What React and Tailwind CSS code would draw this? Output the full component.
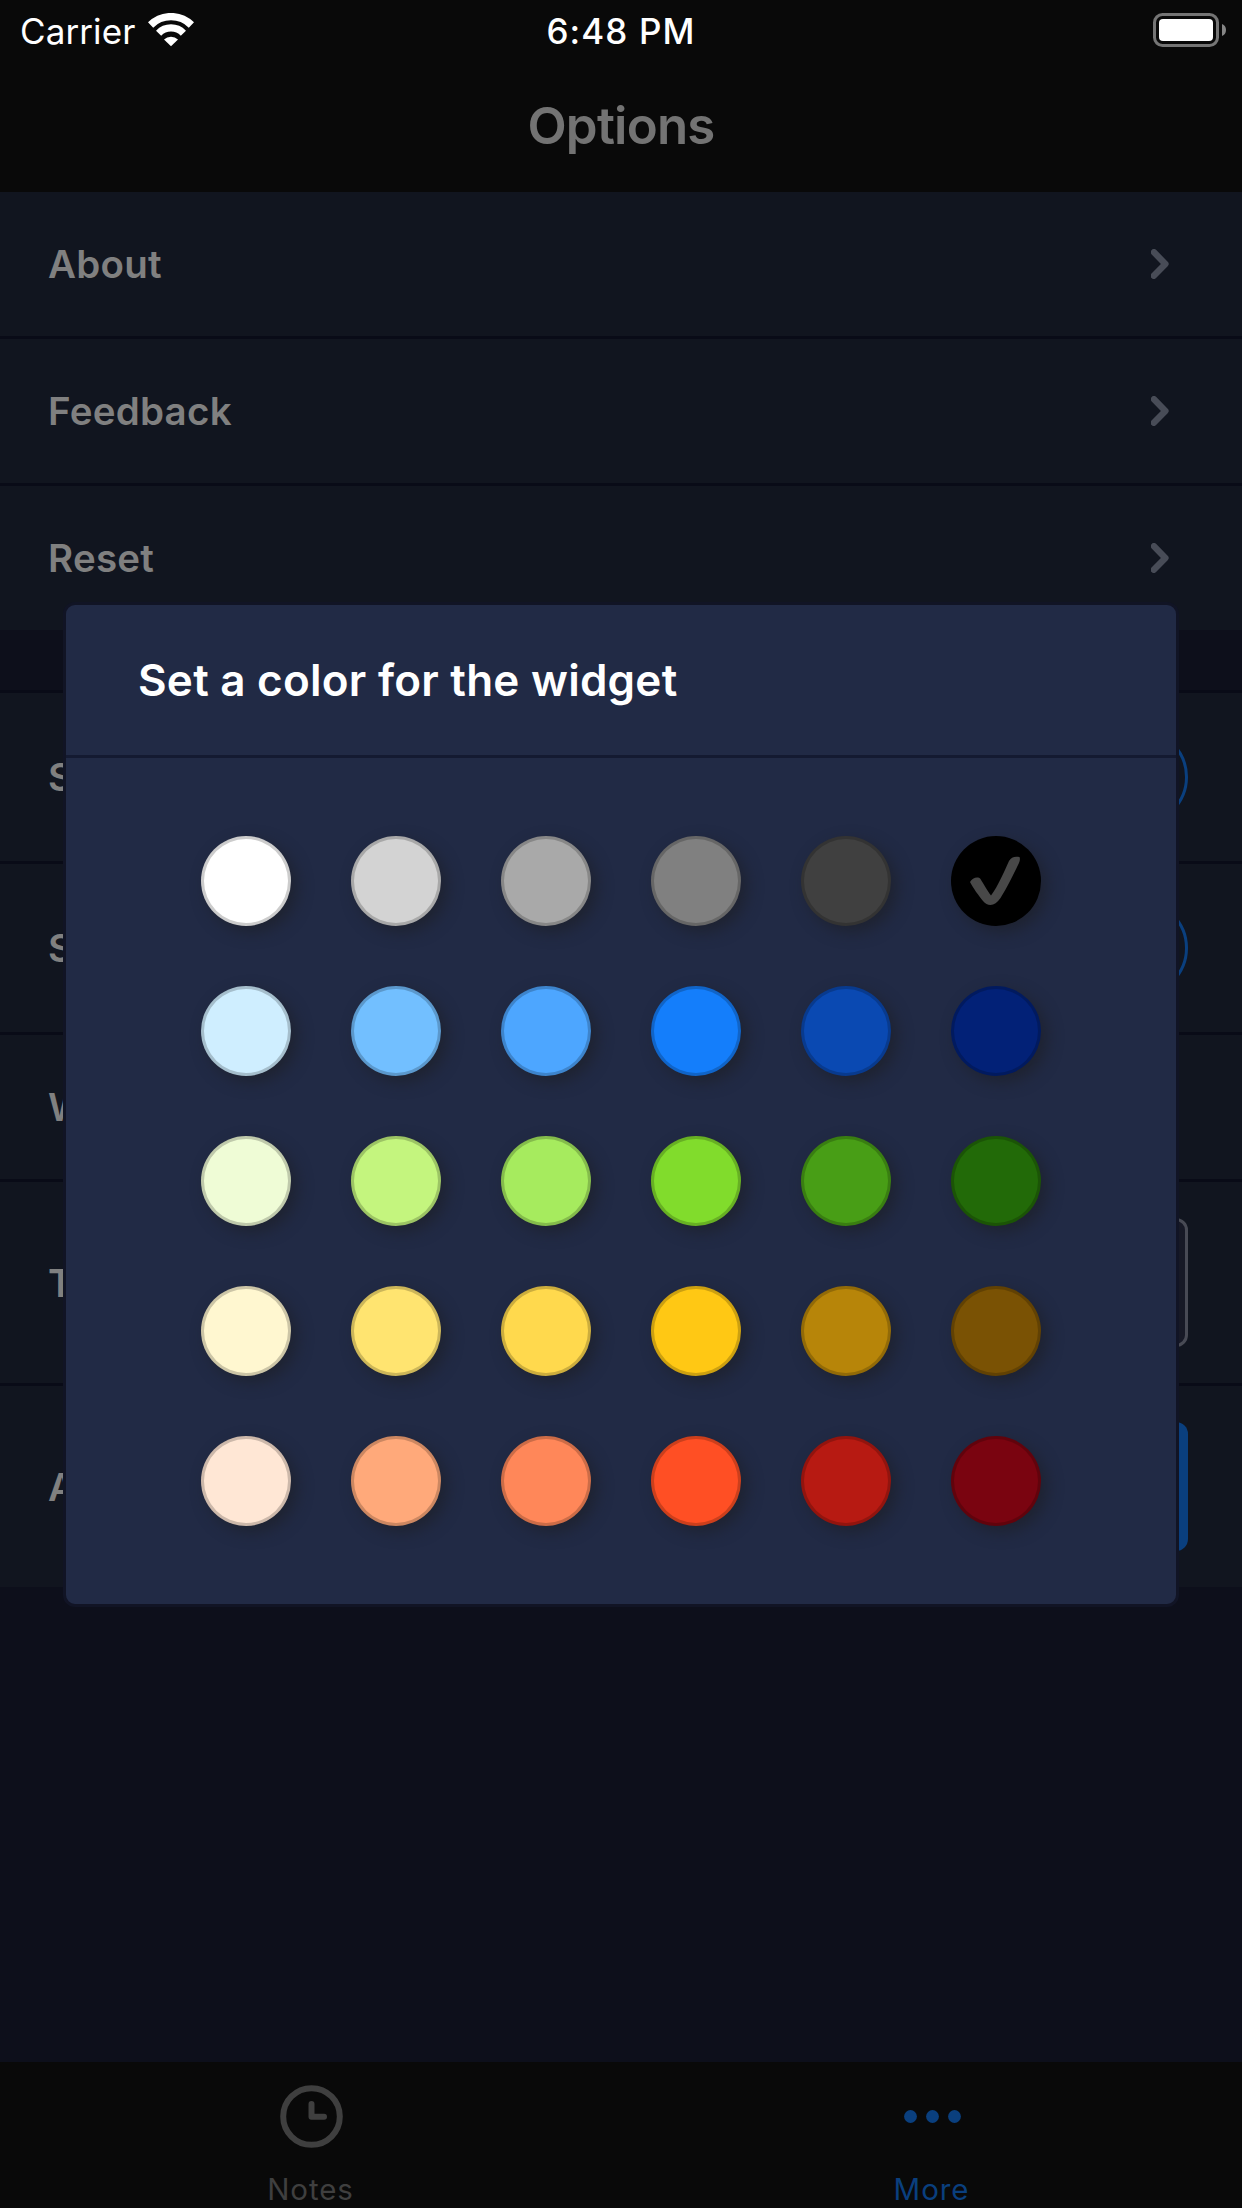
const swatches = [
  "#ffffff", "#d3d3d3", "#a9a9a9", "#808080", "#404040", "#000000",
  "#cfeeff", "#72bfff", "#4da6ff", "#147efb", "#0a49b2", "#022177",
  "#effcd6", "#c4f57e", "#a6eb5e", "#81dc2c", "#489e16", "#226a08",
  "#fff7d0", "#ffe470", "#ffd94d", "#ffc814", "#b78509", "#7a5204",
  "#ffe7d5", "#ffa97a", "#ff8759", "#ff4f24", "#b71a12", "#7a0410",
];

const Chevron = () => (
  <svg className="h-[30px] w-[18px]" viewBox="0 0 18 30" fill="none" stroke="#484c57" strokeWidth="6.4" strokeLinecap="round" strokeLinejoin="round">
    <path d="M3 3.2 L14.4 15 L2.8 26.8" />
  </svg>
);

const rowLabel = "pt-[2px] text-[38.5px] font-semibold tracking-[0.25px] text-[#808080]";

const LinkRow = ({ label, line }) => (
  <div className={line ? "flex h-[147px] items-center justify-between border-b-3 border-[#090b17] bg-[#11151f] pl-[48px] pr-[73px]" : "flex h-[144px] items-center justify-between bg-[#11151f] pl-[48px] pr-[73px]"}>
    <span className={rowLabel}>{label}</span>
    <Chevron />
  </div>
);

export default function App() {
  return (
    <div className="relative flex h-[2208px] w-[1242px] flex-col overflow-hidden bg-[#0d0f1b] font-['Inter',sans-serif]">
      <header className="h-[192px] shrink-0 bg-[#090909]">
        <div className="grid h-[62px] grid-cols-3 items-center px-[20px] text-white">
          <div className="flex items-center gap-[13px] pt-px">
            <span className="text-[35px] leading-none tracking-[0.1px]">Carrier</span>
            <svg className="mb-[3px] h-[34px] w-[46px]" viewBox="0 0 46 34" fill="none" stroke="#fff">
              <path d="M2.6 12 A29 29 0 0 1 43.4 12" strokeWidth="7.4" />
              <path d="M10.6 20.2 A17.3 17.3 0 0 1 35.4 20.2" strokeWidth="7.2" />
              <path d="M16 26.6 A10 10 0 0 1 30 26.6 L23 33.3 Z" fill="#fff" stroke="none" />
            </svg>
          </div>
          <span className="pt-px text-center text-[35px] leading-none font-medium tracking-[1.1px]">6:48 PM</span>
          <svg className="mr-[-5px] mb-[2px] h-[34px] w-[74px] justify-self-end" viewBox="0 0 74 34">
            <rect x="1.5" y="1.5" width="63" height="31" rx="8" fill="none" stroke="#757575" strokeWidth="3" />
            <rect x="6" y="6" width="54" height="22" rx="4" fill="#fff" />
            <path d="M69 11 a6.5 6.5 0 0 1 0 12 Z" fill="#858585" />
          </svg>
        </div>
        <h1 className="pt-[38px] text-center text-[51px] leading-none font-semibold tracking-[-0.8px] text-[#737373]">Options</h1>
      </header>

      <main className="flex-1">
        <LinkRow label="About" line />
        <LinkRow label="Feedback" line />
        <LinkRow label="Reset" />
        <section className="mt-[60px] border-t-3 border-[#090b17] bg-[#11151f]">
          <div className="flex h-[171px] items-center justify-between border-b-3 border-[#090b17] pl-[48px] pr-[54px]">
            <span className={rowLabel}>S</span>
            <span className="size-[96px] rounded-full border-3 border-[#0a3f7e]" />
          </div>
          <div className="flex h-[171px] items-center justify-between border-b-3 border-[#090b17] pl-[48px] pr-[54px]">
            <span className={rowLabel}>S</span>
            <span className="size-[96px] rounded-full border-3 border-[#0a3f7e]" />
          </div>
          <div className="flex h-[147px] items-center border-b-3 border-[#090b17] pl-[48px]">
            <span className={rowLabel}>W</span>
          </div>
          <div className="flex h-[204px] items-center justify-between border-b-3 border-[#090b17] pl-[48px] pr-[54px]">
            <span className={rowLabel}>T</span>
            <span className="h-[129px] w-[240px] rounded-[12px] border-3 border-[#484a54] bg-[#171926]" />
          </div>
          <div className="flex h-[201px] items-center justify-between pl-[48px] pr-[54px]">
            <span className={rowLabel}>A</span>
            <span className="h-[129px] w-[240px] rounded-[12px] bg-[#0a3f7e]" />
          </div>
        </section>
      </main>

      <nav className="grid h-[146px] shrink-0 grid-cols-2 bg-[#090909] text-[29.5px] tracking-[0.9px]">
        <div className="flex flex-col items-center pt-[23px] text-[#3f3f3f]">
          <svg className="h-[64px] w-[64px]" viewBox="0 0 64 64" fill="none" stroke="currentColor" strokeWidth="6" strokeLinecap="round" strokeLinejoin="round">
            <circle cx="32.5" cy="31.5" r="28.3" />
            <path d="M32.5 19 V31.7 H45" />
          </svg>
          <span className="mt-[26px] leading-none">Notes</span>
        </div>
        <div className="flex flex-col items-center pt-[23px] text-[#0a3f7e]">
          <svg className="h-[64px] w-[64px]" viewBox="0 0 64 64" fill="currentColor">
            <circle cx="10.5" cy="31.5" r="6.4" />
            <circle cx="32.5" cy="31.5" r="6.4" />
            <circle cx="54.5" cy="31.5" r="6.4" />
          </svg>
          <span className="mt-[26px] leading-none">More</span>
        </div>
      </nav>

      <div role="dialog" className="absolute inset-x-[63px] top-[602px] h-[1005px] rounded-[12px] border-3 border-[#111425] bg-[#212a45]">
        <div className="flex h-[153px] items-center border-b-3 border-[#141a31] pl-[72px]">
          <h2 className="text-[44px] font-semibold tracking-[0.25px] text-white">Set a color for the widget</h2>
        </div>
        <div className="grid grid-cols-6 gap-[60px] px-[135px] pt-[78px]">
          {swatches.map((color, i) => (
            <div key={color} style={{ backgroundColor: color }} className="flex size-[90px] items-center justify-center rounded-full border-3 border-black/20 shadow-[6px_6px_15px_rgba(30,32,42,0.75)]">
              {i === 5 && (
                <svg className="mr-[3px] h-[50px] w-[52px] shrink-0" viewBox="0 0 52 50">
                  <path d="M1 26 C3 22 9 20 11.5 23 C14 27 18 34 22 39.5 C29 30 35 16 40 5 C42 1 46 0 50.5 1 C51.5 3 50.5 6 49 9 C44 19 38 32 31.5 42 C26 50.5 19 51 14 45 C10 40 4 32 1 26 Z" fill="#484848" />
                </svg>
              )}
            </div>
          ))}
        </div>
      </div>
    </div>
  );
}
